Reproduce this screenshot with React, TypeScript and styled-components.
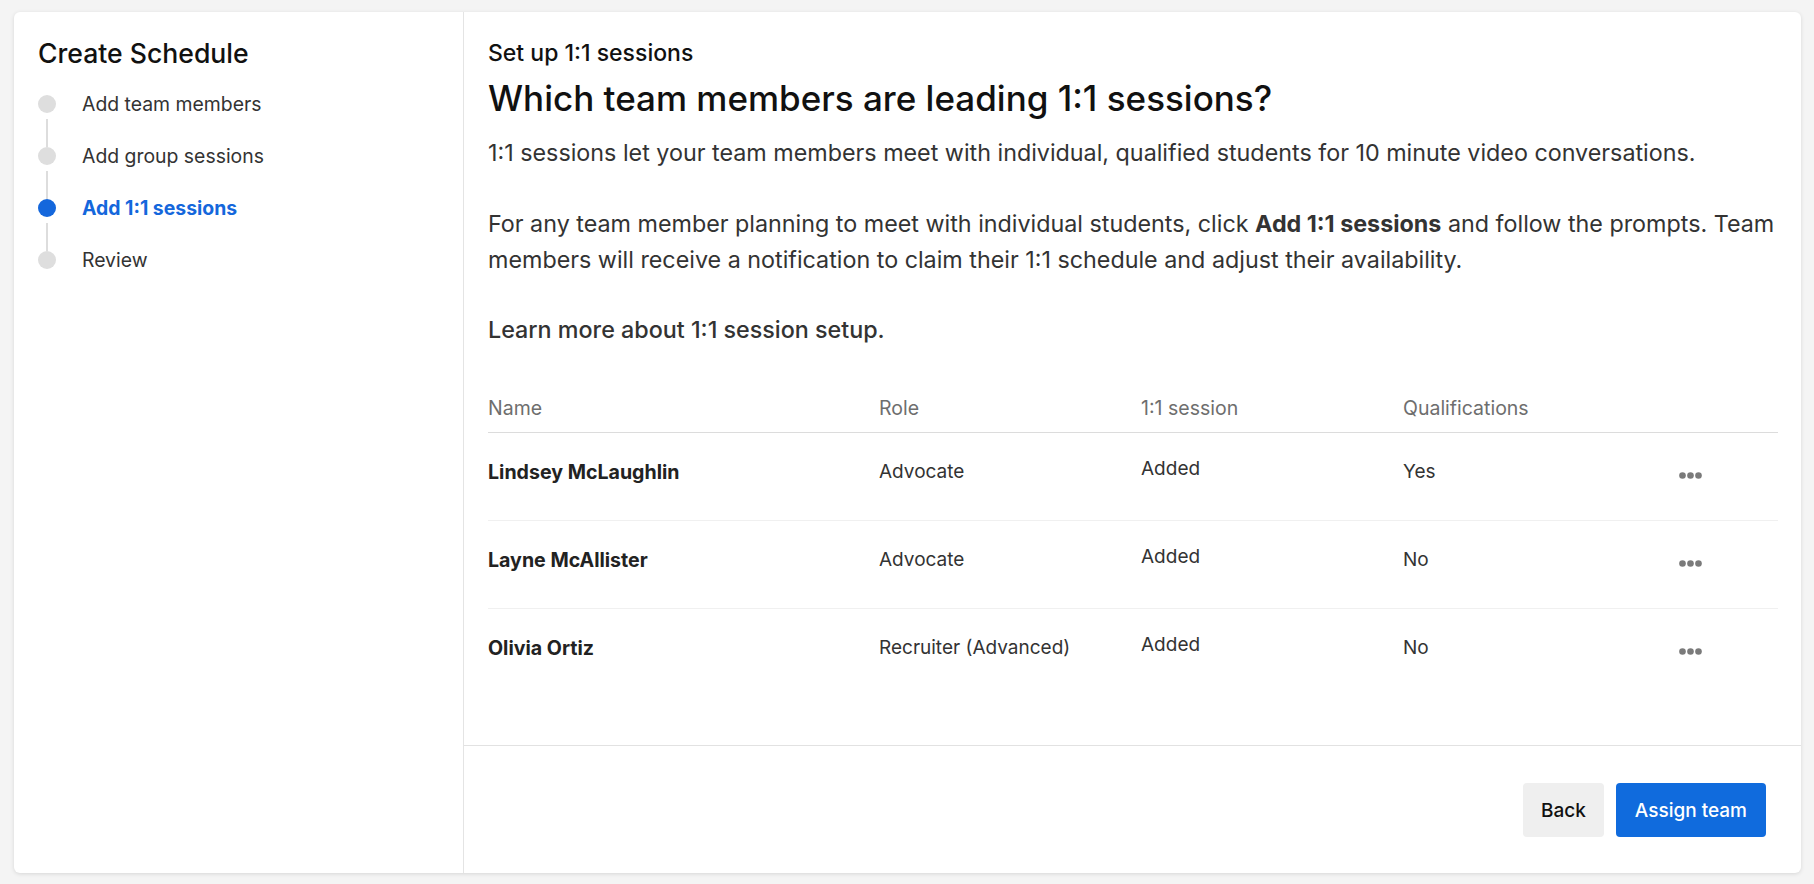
import React from "react";
import styled, { createGlobalStyle } from "styled-components";

const GlobalStyle = createGlobalStyle`
  html, body { margin: 0; padding: 0; height: 100%; }
  body {
    background: #f4f4f4;
    font-family: Inter, "Noto Sans", "Liberation Sans", sans-serif;
    color: #333;
    -webkit-font-smoothing: antialiased;
  }
  #root { height: 100%; }
  *, *::before, *::after { box-sizing: border-box; }
`;

const Page = styled.div`
  height: 100vh;
  padding: 12px 13px 11px 14px;
  display: flex;
`;

const Card = styled.div`
  flex: 1;
  display: flex;
  background: #fff;
  border-radius: 6px;
  box-shadow: 0 1px 4px rgba(0, 0, 0, 0.12);
  overflow: hidden;
`;

const Sidebar = styled.aside`
  width: 450px;
  flex: none;
  border-right: 1px solid #e4e4e4;
  padding: 25px 24px;
`;

const SideTitle = styled.h1`
  margin: 0;
  font-size: 26.6px;
  line-height: 32px;
  font-weight: 500;
  color: #111;
`;

const Steps = styled.ol`
  list-style: none;
  margin: 9px 0 0;
  padding: 0;
`;

const Step = styled.li<{ $active?: boolean; $last?: boolean }>`
  position: relative;
  height: 52px;
  display: flex;
  align-items: center;
  gap: 26px;
  font-size: 19.4px;
  line-height: 28px;
  font-weight: ${(p) => (p.$active ? 700 : 400)};
  color: ${(p) => (p.$active ? "#1467dc" : "#333")};

  &::after {
    content: "";
    display: ${(p) => (p.$last ? "none" : "block")};
    position: absolute;
    left: 8px;
    top: 41px;
    width: 2px;
    height: 28px;
    background: #dddddd;
  }
`;

const Dot = styled.span<{ $active?: boolean }>`
  width: 18px;
  height: 18px;
  flex: none;
  border-radius: 50%;
  background: ${(p) => (p.$active ? "#1467dc" : "#dedede")};
`;

const Main = styled.main`
  flex: 1;
  min-width: 0;
  display: flex;
  flex-direction: column;
`;

const Content = styled.section`
  flex: 1;
  padding: 27px 23px 0 24px;
`;

const Eyebrow = styled.div`
  font-size: 23px;
  line-height: 28px;
  font-weight: 500;
  color: #111;
`;

const Heading = styled.h2`
  margin: 9px 0 0;
  font-size: 35px;
  line-height: 44px;
  font-weight: 500;
  color: #111;
`;

const Para = styled.p<{ $gap: number; $strong?: boolean }>`
  margin: ${(p) => p.$gap}px 0 0;
  font-size: 23.3px;
  line-height: 36px;
  color: #333;
  font-weight: ${(p) => (p.$strong ? 500 : 400)};

  b { font-weight: 700; }
`;

const Table = styled.div`
  margin-top: 46px;
`;

const Row = styled.div<{ $head?: boolean; $last?: boolean }>`
  display: grid;
  grid-template-columns: 391px 262px 262px 1fr 99px;
  font-size: ${(p) => (p.$head ? 19.5 : 19)}px;
  line-height: 28px;
  height: ${(p) => (p.$head ? "auto" : "88px")};
  padding-bottom: ${(p) => (p.$head ? "10px" : "0")};
  color: ${(p) => (p.$head ? "#6e6e6e" : "#333")};
  border-bottom: 1px solid
    ${(p) => (p.$head ? "#dcdcdc" : p.$last ? "transparent" : "#f0f0f0")};
`;

const Cell = styled.div<{ $bold?: boolean; $raise?: boolean }>`
  padding-top: ${(p) => (p.$raise ? 22 : 25)}px;
  font-weight: ${(p) => (p.$bold ? 700 : 400)};
  font-size: ${(p) => (p.$bold ? "19.6px" : "inherit")};
  color: ${(p) => (p.$bold ? "#222" : "inherit")};
`;

const HeadCell = styled.div``;

const ActionCell = styled.div`
  padding-top: 39px;
  display: flex;
  align-items: flex-start;
`;

const Footer = styled.footer`
  border-top: 1px solid #e2e2e2;
  padding: 37px 35px 36px;
  display: flex;
  justify-content: flex-end;
  gap: 12px;
`;

const Button = styled.button<{ $primary?: boolean }>`
  height: 54px;
  padding: 0 ${(p) => (p.$primary ? 19 : 18)}px;
  border: none;
  border-radius: 4px;
  font-family: inherit;
  font-size: 19px;
  font-weight: 500;
  background: ${(p) => (p.$primary ? "#106bdd" : "#efefef")};
  color: ${(p) => (p.$primary ? "#fff" : "#111")};
  cursor: pointer;
`;

const MoreIcon = () => (
  <svg width="23" height="7" viewBox="0 0 23 7" aria-hidden>
    <circle cx="3.5" cy="3.5" r="3.3" fill="#7a7a7a" />
    <circle cx="11.5" cy="3.5" r="3.3" fill="#7a7a7a" />
    <circle cx="19.5" cy="3.5" r="3.3" fill="#7a7a7a" />
  </svg>
);

const steps = [
  { label: "Add team members" },
  { label: "Add group sessions" },
  { label: "Add 1:1 sessions", active: true },
  { label: "Review" },
];

const members = [
  { name: "Lindsey McLaughlin", role: "Advocate", session: "Added", qual: "Yes" },
  { name: "Layne McAllister", role: "Advocate", session: "Added", qual: "No" },
  { name: "Olivia Ortiz", role: "Recruiter (Advanced)", session: "Added", qual: "No" },
];

export default function App() {
  return (
    <>
      <GlobalStyle />
      <Page>
        <Card>
          <Sidebar>
            <SideTitle>Create Schedule</SideTitle>
            <Steps>
              {steps.map((s, i) => (
                <Step key={s.label} $active={s.active} $last={i === steps.length - 1}>
                  <Dot $active={s.active} />
                  {s.label}
                </Step>
              ))}
            </Steps>
          </Sidebar>
          <Main>
            <Content>
              <Eyebrow>Set up 1:1 sessions</Eyebrow>
              <Heading>Which team members are leading 1:1 sessions?</Heading>
              <Para $gap={15}>
                1:1 sessions let your team members meet with individual, qualified students for 10
                minute video conversations.
              </Para>
              <Para $gap={35}>
                For any team member planning to meet with individual students, click{" "}
                <b>Add 1:1 sessions</b> and follow the prompts. Team
                <br />
                members will receive a notification to claim their 1:1 schedule and adjust their
                availability.
              </Para>
              <Para $gap={34} $strong>
                Learn more about 1:1 session setup.
              </Para>
              <Table>
                <Row $head>
                  <HeadCell>Name</HeadCell>
                  <HeadCell>Role</HeadCell>
                  <HeadCell>1:1 session</HeadCell>
                  <HeadCell>Qualifications</HeadCell>
                  <HeadCell />
                </Row>
                {members.map((m, i) => (
                  <Row key={m.name} $last={i === members.length - 1}>
                    <Cell $bold>{m.name}</Cell>
                    <Cell>{m.role}</Cell>
                    <Cell $raise>{m.session}</Cell>
                    <Cell>{m.qual}</Cell>
                    <ActionCell>
                      <MoreIcon />
                    </ActionCell>
                  </Row>
                ))}
              </Table>
            </Content>
            <Footer>
              <Button>Back</Button>
              <Button $primary>Assign team</Button>
            </Footer>
          </Main>
        </Card>
      </Page>
    </>
  );
}
